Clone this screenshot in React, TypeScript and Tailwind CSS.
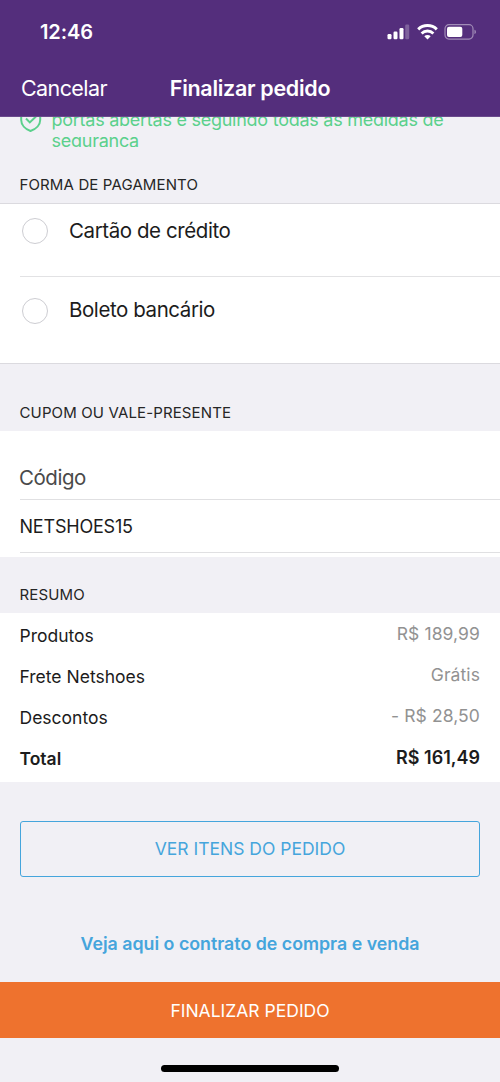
import type { ReactNode } from "react";
import clsx from "clsx";

interface SummaryRow {
  label: string;
  value: string;
  total?: boolean;
}

const paymentMethods = ["Cartão de crédito", "Boleto bancário"];

const summary: SummaryRow[] = [
  { label: "Produtos", value: "R$ 189,99" },
  { label: "Frete Netshoes", value: "Grátis" },
  { label: "Descontos", value: "- R$ 28,50" },
  { label: "Total", value: "R$ 161,49", total: true },
];

function StatusBar() {
  return (
    <div className="flex h-[63px] items-center justify-between pl-10 pr-[23px]">
      <span className="text-[20px] font-semibold tracking-[-0.1px]">12:46</span>
      <div className="flex items-center gap-[6.5px]">
        {/* Signal */}
        <svg width="23" height="16" viewBox="0 0 23 16" fill="#fff">
          <rect x="0.5" y="10" width="4" height="5.2" rx="1.2" />
          <rect x="6.5" y="7.5" width="4" height="7.7" rx="1.2" />
          <rect x="12.5" y="4" width="4" height="11.2" rx="1.2" />
          <rect x="18.2" y="0.5" width="4" height="14.7" rx="1.2" opacity="0.25" />
        </svg>
        {/* Wifi */}
        <svg width="21" height="16" viewBox="0 0 21 16" fill="none" stroke="#fff">
          <path d="M1.2 5.3a13.4 13.4 0 0 1 18.6 0" strokeWidth="3" />
          <path d="M4.6 9.4a8.4 8.4 0 0 1 11.8 0" strokeWidth="2.8" />
          <path d="M7.3 12.3a4.6 4.6 0 0 1 6.4 0L10.5 15.5Z" fill="#fff" stroke="none" />
        </svg>
        {/* Battery */}
        <svg width="33" height="16" viewBox="0 0 33 16">
          <rect x="1" y="0.7" width="28" height="14.4" rx="4" fill="none" stroke="#fff" strokeOpacity="0.45" strokeWidth="1.2" />
          <rect x="3" y="2.7" width="15.3" height="10.3" rx="2" fill="#fff" />
          <path d="M30.5 5.7c1.8.6 1.8 3.8 0 4.4z" fill="#fff" opacity="0.5" />
        </svg>
      </div>
    </div>
  );
}

function Header() {
  return (
    <header className="h-[117px] border-b border-[#6a4a8c] bg-[#542e7c] text-white">
      <StatusBar />
      <div className="grid h-[51px] grid-cols-[1fr_auto_1fr] items-center whitespace-nowrap px-[21px]">
        <button className="text-left text-[21.5px] leading-none tracking-[-0.6px]">Cancelar</button>
        <h1 className="text-[21.5px] font-semibold leading-none tracking-[-0.3px]">Finalizar pedido</h1>
      </div>
    </header>
  );
}

// The notice is scrolled half way under the header, so both of its edges are clipped
function SafetyNotice() {
  return (
    <div className="flex h-[30px] overflow-hidden bg-[#f1f0f5] text-[#5bd08c]">
      <svg className="-mt-[5px] ml-5 h-[20px] w-[22px] shrink-0" viewBox="0 0 22 20" fill="none" stroke="currentColor" strokeWidth="2">
        <path d="M1.2 0v8c0 5 4 9.2 9.3 11C16 17.2 20.2 13 20.2 8V0" />
        <path d="M6 6.5l3.8 3.9L16 4.5" />
      </svg>
      <p className="-mt-2 ml-[9.5px] whitespace-nowrap text-[18px] leading-[21px] tracking-[-0.26px]">
        portas abertas e seguindo todas as medidas de
        <br />
        segurança
      </p>
    </div>
  );
}

function SectionTitle({ className, children }: { className: string; children: ReactNode }) {
  return (
    <h2
      className={clsx(
        "flex items-end bg-[#f1f0f5] pl-[19.5px] text-[15px] leading-5 tracking-[0.13px] text-[#262626]",
        className
      )}
    >
      {children}
    </h2>
  );
}

export default function App() {
  return (
    <div className="flex h-[1082px] w-[500px] flex-col overflow-hidden bg-[#f1f0f5] font-['Inter',sans-serif] text-[#1c1c1c]">
      <Header />
      <SafetyNotice />

      <SectionTitle className="h-[56px] pb-2">FORMA DE PAGAMENTO</SectionTitle>
      <div className="h-[161px] border-y border-[#dbdadf] bg-white pl-5">
        {paymentMethods.map((method, index) => (
          <label
            key={method}
            className={clsx(
              "flex items-center text-[20.5px] tracking-[-0.42px]",
              index === 0 ? "h-[73px] border-b border-[#e2e2e4] pb-[18px]" : "h-[86px] pb-[19px]"
            )}
          >
            <span className="ml-[1.5px] mr-[21.5px] size-[26px] rounded-full border-[1.5px] border-[#cdcdd2]" />
            {method}
          </label>
        ))}
      </div>

      <SectionTitle className="h-[67px] pb-2">CUPOM OU VALE-PRESENTE</SectionTitle>
      <div className="h-[126px] bg-white pl-5">
        <div className="flex h-[69px] items-end border-b border-[#e0e0e2] pb-[5px] text-[20.5px] tracking-[-0.45px] text-[#4a4a4a]">
          <span className="-ml-px">Código</span>
        </div>
        <div className="flex h-[53px] items-center border-b border-[#e0e0e2] pt-px text-[18px] tracking-[-0.2px]">
          <span className="-ml-[0.5px]">NETSHOES15</span>
        </div>
      </div>

      <SectionTitle className="h-[56px] pb-2">RESUMO</SectionTitle>
      <dl className="h-[169px] bg-white pl-[19.5px] pr-5 pt-[3px] text-[17.5px]">
        {summary.map(({ label, value, total }) => (
          <div key={label} className={clsx("flex h-[41px] items-center justify-between", total && "font-semibold")}>
            <dt>{label}</dt>
            <dd className={clsx("-mt-1", total ? "text-[18px]" : "tracking-[0.1px] text-[#929292]")}>{value}</dd>
          </div>
        ))}
      </dl>

      <button className="mx-5 mt-[39px] h-[56px] shrink-0 rounded-[3px] border-[1.5px] border-[#45a5dc] text-[17.5px] text-[#45a5dc]">
        VER ITENS DO PEDIDO
      </button>
      <a className="mt-[53px] h-[28px] text-center text-[17.8px] font-semibold leading-[28px] text-[#45a5dc]">
        Veja aqui o contrato de compra e venda
      </a>
      <button className="mt-[24px] h-[56px] shrink-0 bg-[#ee722e] pt-0.5 text-[17.5px] text-white">FINALIZAR PEDIDO</button>
      <div className="mx-auto mt-[27px] h-[7px] w-[178px] shrink-0 rounded-full bg-black" />
    </div>
  );
}
